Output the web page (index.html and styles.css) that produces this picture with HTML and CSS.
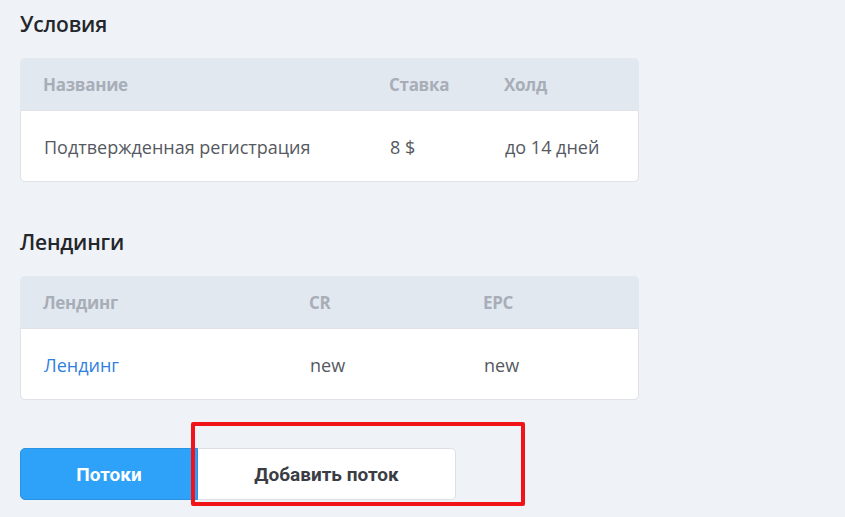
FILE: index.html
```html
<!DOCTYPE html>
<html lang="ru">
<head>
<meta charset="utf-8">
<title>Условия</title>
<link rel="stylesheet" href="styles.css">
</head>
<body>
<div class="page">
  <h2 class="title">Условия</h2>
  <div class="table t1">
    <div class="row head">
      <div>Название</div><div>Ставка</div><div>Холд</div>
    </div>
    <div class="row body">
      <div>Подтвержденная регистрация</div><div>8 $</div><div>до 14 дней</div>
    </div>
  </div>

  <h2 class="title second">Лендинги</h2>
  <div class="table t2">
    <div class="row head">
      <div>Лендинг</div><div>CR</div><div>EPC</div>
    </div>
    <div class="row body">
      <div><a class="link" href="#">Лендинг</a></div><div>new</div><div>new</div>
    </div>
  </div>

  <div class="actions">
    <button class="btn primary">Потоки</button>
    <button class="btn secondary">Добавить поток</button>
    <div class="highlight"></div>
  </div>
</div>
</body>
</html>
```

FILE: styles.css
```css
html, body {
  margin: 0;
  padding: 0;
}
body {
  background: #eff2f6;
  font-family: "Open Sans", "Noto Sans", sans-serif;
  color: #222;
  width: 845px;
  height: 517px;
  overflow: hidden;
}
.page {
  padding: 10px 20px 0 20px;
}
.title {
  margin: 0;
  font-size: 21px;
  font-weight: 600;
  line-height: 28px;
  color: #23262b;
  letter-spacing: -0.2px;
}
.second {
  margin-top: 46px;
}
.table {
  width: 619px;
  margin-top: 20px;
  border-radius: 5px;
  background: #e2e8f0;
  box-sizing: border-box;
}
.row {
  display: grid;
  padding-left: 23px;
  align-items: center;
}
.t1 .row { grid-template-columns: 346px 115px 1fr; }
.t2 .row { grid-template-columns: 266px 174px 1fr; }
.head {
  height: 52px;
  color: #a8aeb8;
  font-size: 17px;
  font-weight: 700;
  letter-spacing: -0.3px;
}
.body {
  height: 72px;
  background: #fff;
  border: 1px solid #dfe3e8;
  border-radius: 0 0 5px 5px;
  box-sizing: border-box;
  padding-left: 23px;
  color: #55595f;
  font-size: 18px;
  font-weight: 400;
  padding-top: 1px;
}
.link {
  color: #2f80e0;
  text-decoration: none;
}
.actions {
  position: relative;
  display: flex;
  margin-top: 48px;
}
.btn {
  height: 52px;
  font-family: Roboto, "Open Sans", sans-serif;
  font-weight: 700;
  font-size: 19px;
  cursor: pointer;
  margin: 0;
}
.primary {
  width: 178px;
  background: #2ea1f9;
  color: #fff;
  border: 1px solid #2a91e3;
  border-radius: 5px 0 0 5px;
}
.secondary {
  width: 258px;
  background: #fff;
  color: #3a3d44;
  border: 1px solid #dcdfe4;
  border-left: none;
  border-radius: 0 5px 5px 0;
}
.highlight {
  position: absolute;
  left: 171px;
  top: -26px;
  width: 334px;
  height: 84px;
  border: 4px solid #f0141a;
  box-sizing: border-box;
  border-radius: 2px;
}
```
